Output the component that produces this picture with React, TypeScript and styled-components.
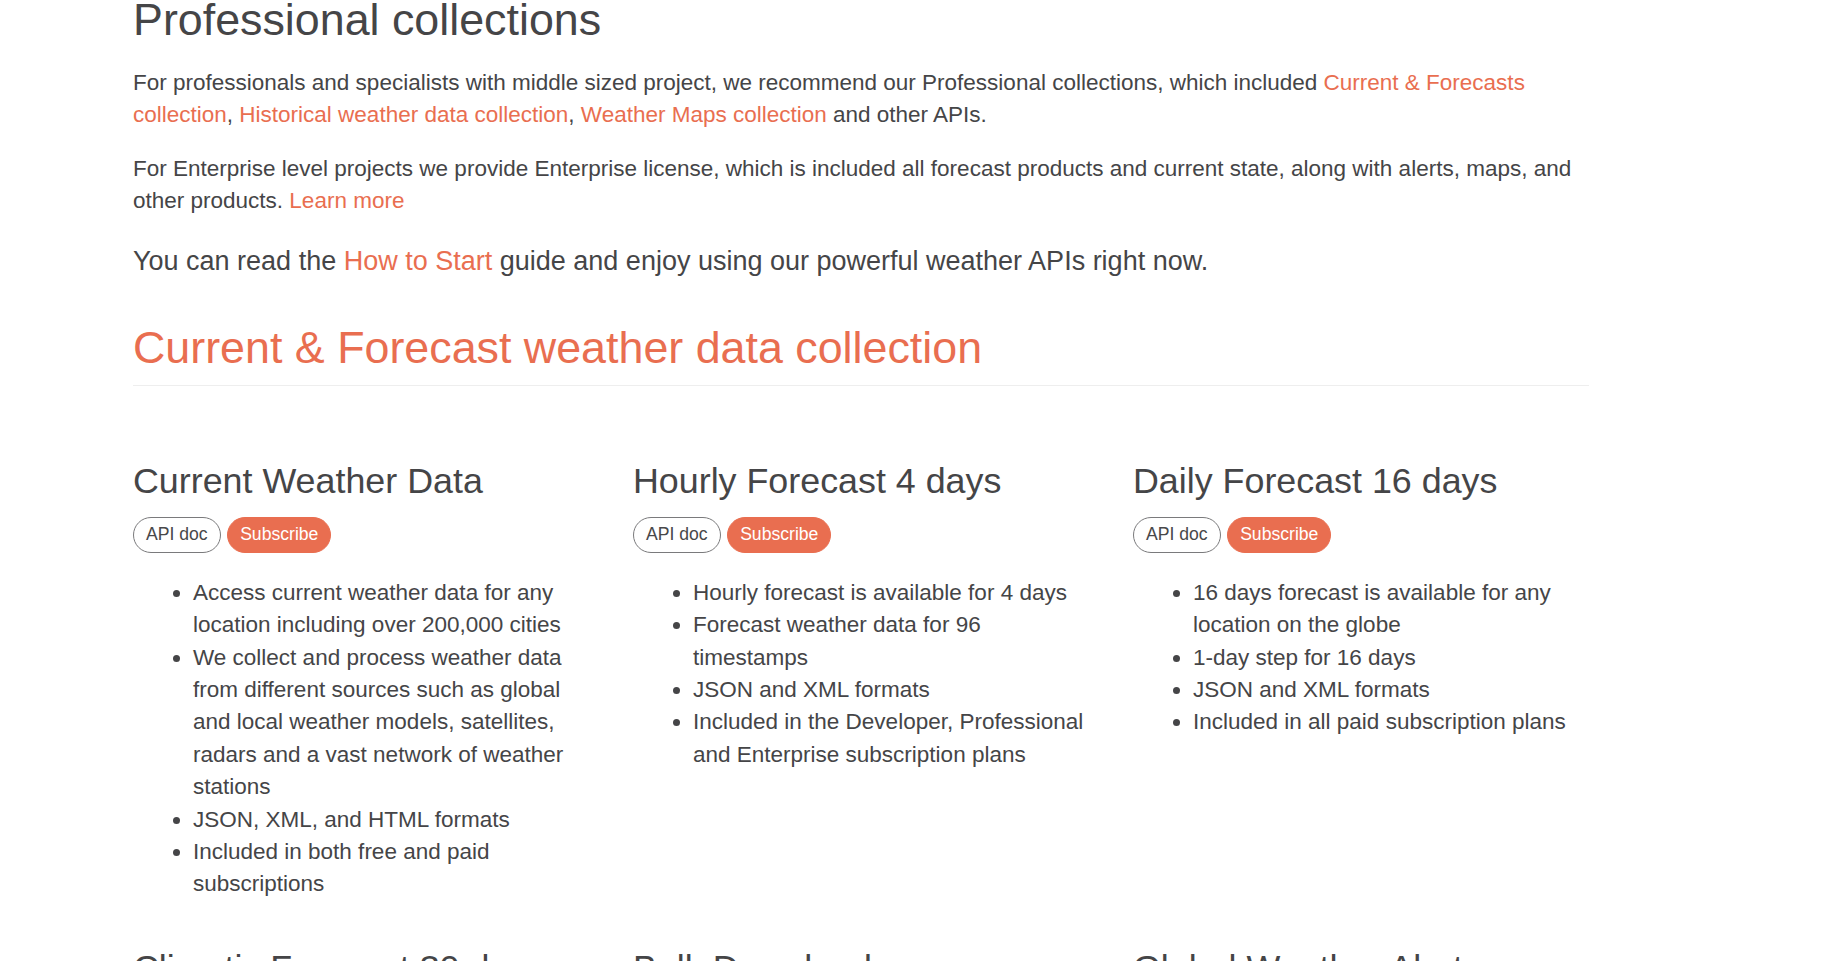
import React from "react";
import styled, { createGlobalStyle } from "styled-components";

const GlobalStyle = createGlobalStyle`
  html, body {
    margin: 0;
    padding: 0;
    background: #ffffff;
  }
  body {
    font-family: "Liberation Sans", Arial, Helvetica, sans-serif;
    color: #454547;
    overflow: hidden;
  }
  * { box-sizing: border-box; }
`;

const Page = styled.div`
  width: 1843px;
  height: 961px;
  overflow: hidden;
`;

const Container = styled.main`
  width: 1456px;
  margin-left: 133px;
`;

const Title = styled.h2`
  margin: -5px 0 22.4px;
  font-size: 44.8px;
  line-height: 1.1;
  font-weight: 400;
  color: #454547;
`;

const Para = styled.p<{ $lead?: boolean }>`
  margin: ${(p) => (p.$lead ? "26px 0 0" : "0 0 22.4px")};
  font-size: ${(p) => (p.$lead ? "27px" : "22.5px")};
  line-height: ${(p) => (p.$lead ? "37.6px" : "32px")};
`;

const Link = styled.a`
  color: #e96e50;
  text-decoration: none;
`;

const SectionHeader = styled.h2`
  margin: 42.5px 0 0;
  padding-bottom: 13px;
  border-bottom: 1px solid #eeeeee;
  font-size: 44.8px;
  line-height: 1.1;
  font-weight: 400;
  color: #e96e50;
`;

const Grid = styled.section`
  display: grid;
  grid-template-columns: repeat(3, 460px);
  column-gap: 40px;
  row-gap: 48px;
  margin-top: 76px;
`;

const Card = styled.article`
  display: flex;
  flex-direction: column;
  align-items: flex-start;
`;

const CardTitle = styled.h3`
  margin: 0;
  font-size: 35.84px;
  line-height: 1.1;
  font-weight: 400;
  color: #454547;
`;

const Buttons = styled.div`
  display: flex;
  gap: 6.5px;
  margin-top: 15px;
`;

const PillButton = styled.a<{ $filled?: boolean }>`
  display: inline-flex;
  align-items: center;
  height: 36px;
  padding: 0 12px;
  border-radius: 18px;
  font-size: 17.6px;
  text-decoration: none;
  border: 1px solid ${(p) => (p.$filled ? "#e96e50" : "#7a7a7c")};
  background: ${(p) => (p.$filled ? "#e96e50" : "#ffffff")};
  color: ${(p) => (p.$filled ? "#ffffff" : "#48484a")};
`;

const List = styled.ul`
  margin: 24px 0 0;
  padding-left: 60px;
  font-size: 22.5px;
  line-height: 32.4px;
  list-style: disc;
`;

type CardData = { title: string; items: string[] };

const cards: CardData[] = [
  {
    title: "Current Weather Data",
    items: [
      "Access current weather data for any location including over 200,000 cities",
      "We collect and process weather data from different sources such as global and local weather models, satellites, radars and a vast network of weather stations",
      "JSON, XML, and HTML formats",
      "Included in both free and paid subscriptions",
    ],
  },
  {
    title: "Hourly Forecast 4 days",
    items: [
      "Hourly forecast is available for 4 days",
      "Forecast weather data for 96 timestamps",
      "JSON and XML formats",
      "Included in the Developer, Professional and Enterprise subscription plans",
    ],
  },
  {
    title: "Daily Forecast 16 days",
    items: [
      "16 days forecast is available for any location on the globe",
      "1-day step for 16 days",
      "JSON and XML formats",
      "Included in all paid subscription plans",
    ],
  },
  {
    title: "Climatic Forecast 30 days",
    items: [
      "Forecast weather data for 30 days",
      "The forecast is based on statistical approach",
      "JSON and XML formats",
    ],
  },
  {
    title: "Bulk Download",
    items: [
      "Current weather and forecasts for a large number of locations",
      "Included in Enterprise subscription plans",
    ],
  },
  {
    title: "Global Weather Alerts",
    items: [
      "Weather alerts from national weather warning systems",
      "Push notifications",
    ],
  },
];

export default function App() {
  return (
    <Page>
      <GlobalStyle />
      <Container>
        <Title>Professional collections</Title>
        <Para>
          For professionals and specialists with middle sized project, we recommend our Professional
          collections, which included <Link href="#">Current &amp; Forecasts collection</Link>,{" "}
          <Link href="#">Historical weather data collection</Link>,{" "}
          <Link href="#">Weather Maps collection</Link> and other APIs.
        </Para>
        <Para>
          For Enterprise level projects we provide Enterprise license, which is included all forecast
          products and current state, along with alerts, maps, and other products.{" "}
          <Link href="#">Learn more</Link>
        </Para>
        <Para $lead>
          You can read the <Link href="#">How to Start</Link> guide and enjoy using our powerful
          weather APIs right now.
        </Para>
        <SectionHeader>Current &amp; Forecast weather data collection</SectionHeader>
        <Grid>
          {cards.map((c) => (
            <Card key={c.title}>
              <CardTitle>{c.title}</CardTitle>
              <Buttons>
                <PillButton href="#">API doc</PillButton>
                <PillButton href="#" $filled>
                  Subscribe
                </PillButton>
              </Buttons>
              <List>
                {c.items.map((it) => (
                  <li key={it}>{it}</li>
                ))}
              </List>
            </Card>
          ))}
        </Grid>
      </Container>
    </Page>
  );
}
